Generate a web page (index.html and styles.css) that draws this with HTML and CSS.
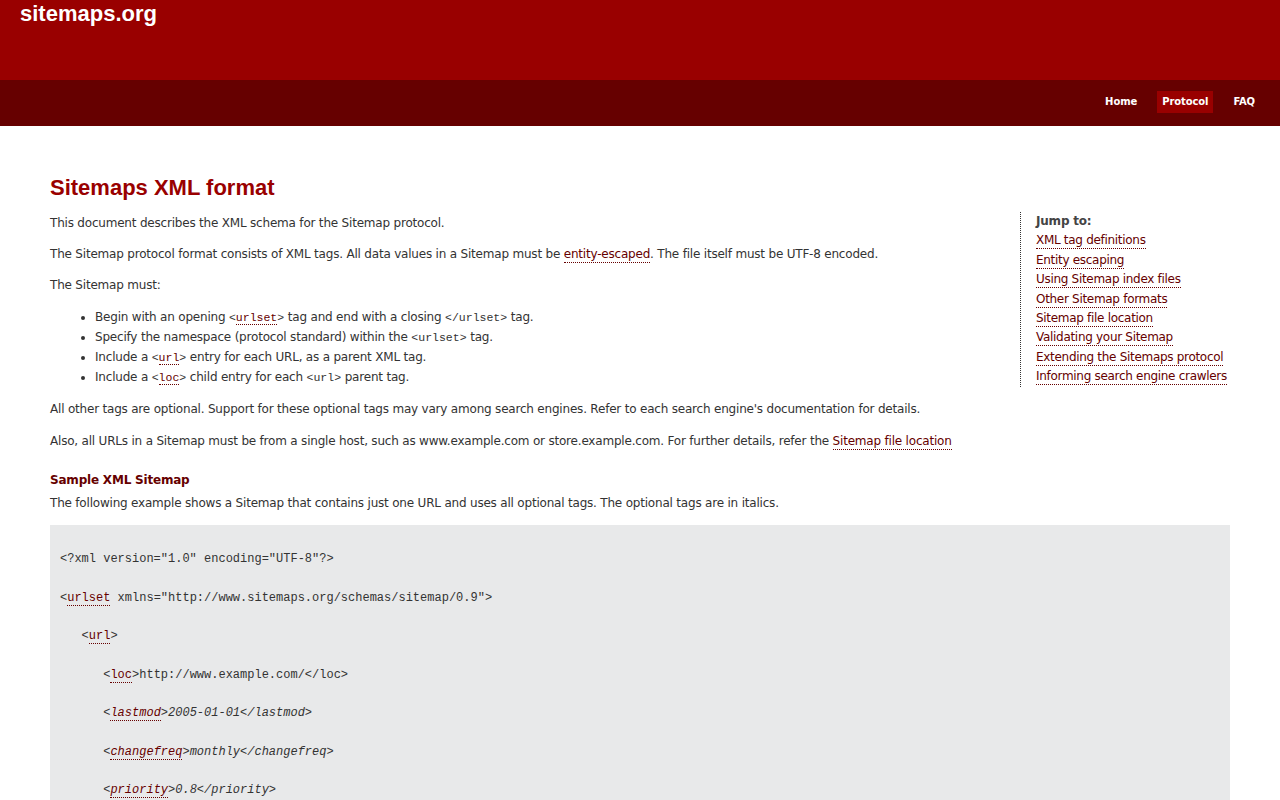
FILE: index.html
```html
<!DOCTYPE html>
<html lang="en">
<head>
<meta charset="utf-8">
<title>sitemaps.org - Protocol</title>
<link rel="stylesheet" href="styles.css">
</head>
<body>
<div class="header">
  <div class="logo">sitemaps.org</div>
</div>
<div class="navbar">
  <a class="nav-item" href="#">Home</a>
  <a class="nav-item active" href="#">Protocol</a>
  <a class="nav-item" href="#">FAQ</a>
</div>
<div class="content">
  <h1 class="title">Sitemaps XML format</h1>
  <div class="jump">
    <div class="jump-head">Jump to:</div>
    <div class="jump-row"><a href="#">XML tag definitions</a></div>
    <div class="jump-row"><a href="#">Entity escaping</a></div>
    <div class="jump-row"><a href="#">Using Sitemap index files</a></div>
    <div class="jump-row"><a href="#">Other Sitemap formats</a></div>
    <div class="jump-row"><a href="#">Sitemap file location</a></div>
    <div class="jump-row"><a href="#">Validating your Sitemap</a></div>
    <div class="jump-row"><a href="#">Extending the Sitemaps protocol</a></div>
    <div class="jump-row"><a href="#">Informing search engine crawlers</a></div>
  </div>
  <p class="para">This document describes the XML schema for the Sitemap protocol.</p>
  <p class="para">The Sitemap protocol format consists of XML tags. All data values in a Sitemap must be <a class="link" href="#">entity-escaped</a>. The file itself must be UTF-8 encoded.</p>
  <p class="para">The Sitemap must:</p>
  <ul class="list">
    <li>Begin with an opening <code class="ic">&lt;<span class="tag">urlset</span>&gt;</code> tag and end with a closing <code class="ic">&lt;/urlset&gt;</code> tag.</li>
    <li>Specify the namespace (protocol standard) within the <code class="ic">&lt;urlset&gt;</code> tag.</li>
    <li>Include a <code class="ic">&lt;<span class="tag">url</span>&gt;</code> entry for each URL, as a parent XML tag.</li>
    <li>Include a <code class="ic">&lt;<span class="tag">loc</span>&gt;</code> child entry for each <code class="ic">&lt;url&gt;</code> parent tag.</li>
  </ul>
  <p class="para para-wide">All other tags are optional. Support for these optional tags may vary among search engines. Refer to each search engine's documentation for details.</p>
  <p class="para">Also, all URLs in a Sitemap must be from a single host, such as www.example.com or store.example.com. For further details, refer the <a class="link" href="#">Sitemap file location</a></p>
  <h3 class="subhead">Sample XML Sitemap</h3>
  <p class="para para-tight">The following example shows a Sitemap that contains just one URL and uses all optional tags. The optional tags are in italics.</p>
<pre class="code">&lt;?xml version="1.0" encoding="UTF-8"?&gt;
&lt;<span class="tag">urlset</span> xmlns="http://www.sitemaps.org/schemas/sitemap/0.9"&gt;
   &lt;<span class="tag">url</span>&gt;
      &lt;<span class="tag">loc</span>&gt;http://www.example.com/&lt;/loc&gt;
      <em>&lt;<span class="tag">lastmod</span>&gt;2005-01-01&lt;/lastmod&gt;</em>
      <em>&lt;<span class="tag">changefreq</span>&gt;monthly&lt;/changefreq&gt;</em>
      <em>&lt;<span class="tag">priority</span>&gt;0.8&lt;/priority&gt;</em>
   &lt;/url&gt;
&lt;/urlset&gt;</pre>
</div>
</body>
</html>
```
FILE: styles.css
```css
html, body {
  margin: 0;
  padding: 0;
  background: #ffffff;
}
body {
  font-family: "DejaVu Sans", Verdana, sans-serif;
  font-size: 12px;
  letter-spacing: -0.2px;
  color: #333333;
}
.header {
  background: #990000;
  height: 80px;
  padding: 1px 20px 0;
  box-sizing: border-box;
}
.logo {
  font-family: "Liberation Sans", Arial, sans-serif;
  font-weight: bold;
  font-size: 22px;
  line-height: 26px;
  letter-spacing: 0;
  color: #ffffff;
}
.navbar {
  background: #660000;
  height: 46px;
  display: flex;
  justify-content: flex-end;
  align-items: center;
  gap: 15px;
  padding: 0 20px 0 0;
}
.nav-item {
  color: #ffffff;
  text-decoration: none;
  font-weight: bold;
  font-size: 10px;
  letter-spacing: -0.1px;
  line-height: 14px;
  padding: 4px 5px;
  margin-top: -2px;
}
.nav-item.active {
  background: #990000;
}
.content {
  padding: 49px 50px 40px;
}
.title {
  font-family: "Liberation Sans", Arial, sans-serif;
  font-size: 22px;
  line-height: 26px;
  letter-spacing: 0;
  font-weight: bold;
  color: #990000;
  margin: 0 0 12px;
}
.jump {
  float: right;
  width: 194px;
  margin: -1px 0 10px 20px;
  padding-left: 15px;
  border-left: 1px dotted #333333;
  line-height: 19.4px;
  white-space: nowrap;
}
.jump-head {
  font-weight: bold;
  color: #444444;
}
.jump-row a {
  color: #660000;
  text-decoration: none;
  border-bottom: 1px dotted #660000;
  padding-bottom: 1px;
  letter-spacing: -0.3px;
}
.para {
  margin: 0 0 11px;
  line-height: 20px;
}
.para-wide {
  margin-bottom: 12px;
}
.para-tight {
  margin-bottom: 12px;
}
.link {
  color: #660000;
  text-decoration: none;
  border-bottom: 1px dotted #660000;
  padding-bottom: 1px;
}
.list {
  margin: 12px 0 12px;
  padding-left: 45px;
  line-height: 20px;
}
.list li {
  height: 20px;
}
.ic {
  font-family: "Liberation Mono", "Courier New", monospace;
  font-size: 11.5px;
  line-height: 10px;
  letter-spacing: 0;
  color: #333333;
}
.tag {
  color: #660000;
  border-bottom: 1px dotted #660000;
}
.subhead {
  font-size: 12px;
  font-weight: bold;
  color: #660000;
  line-height: 20px;
  margin: 19px 0 3px;
}
.code {
  clear: both;
  background: #e8e9ea;
  margin: 0;
  padding: 15px 10px 13px;
  font-family: "Liberation Mono", "Courier New", monospace;
  font-size: 12px;
  letter-spacing: 0;
  line-height: 38.5px;
  color: #333333;
}
.code em {
  font-style: italic;
}
```
